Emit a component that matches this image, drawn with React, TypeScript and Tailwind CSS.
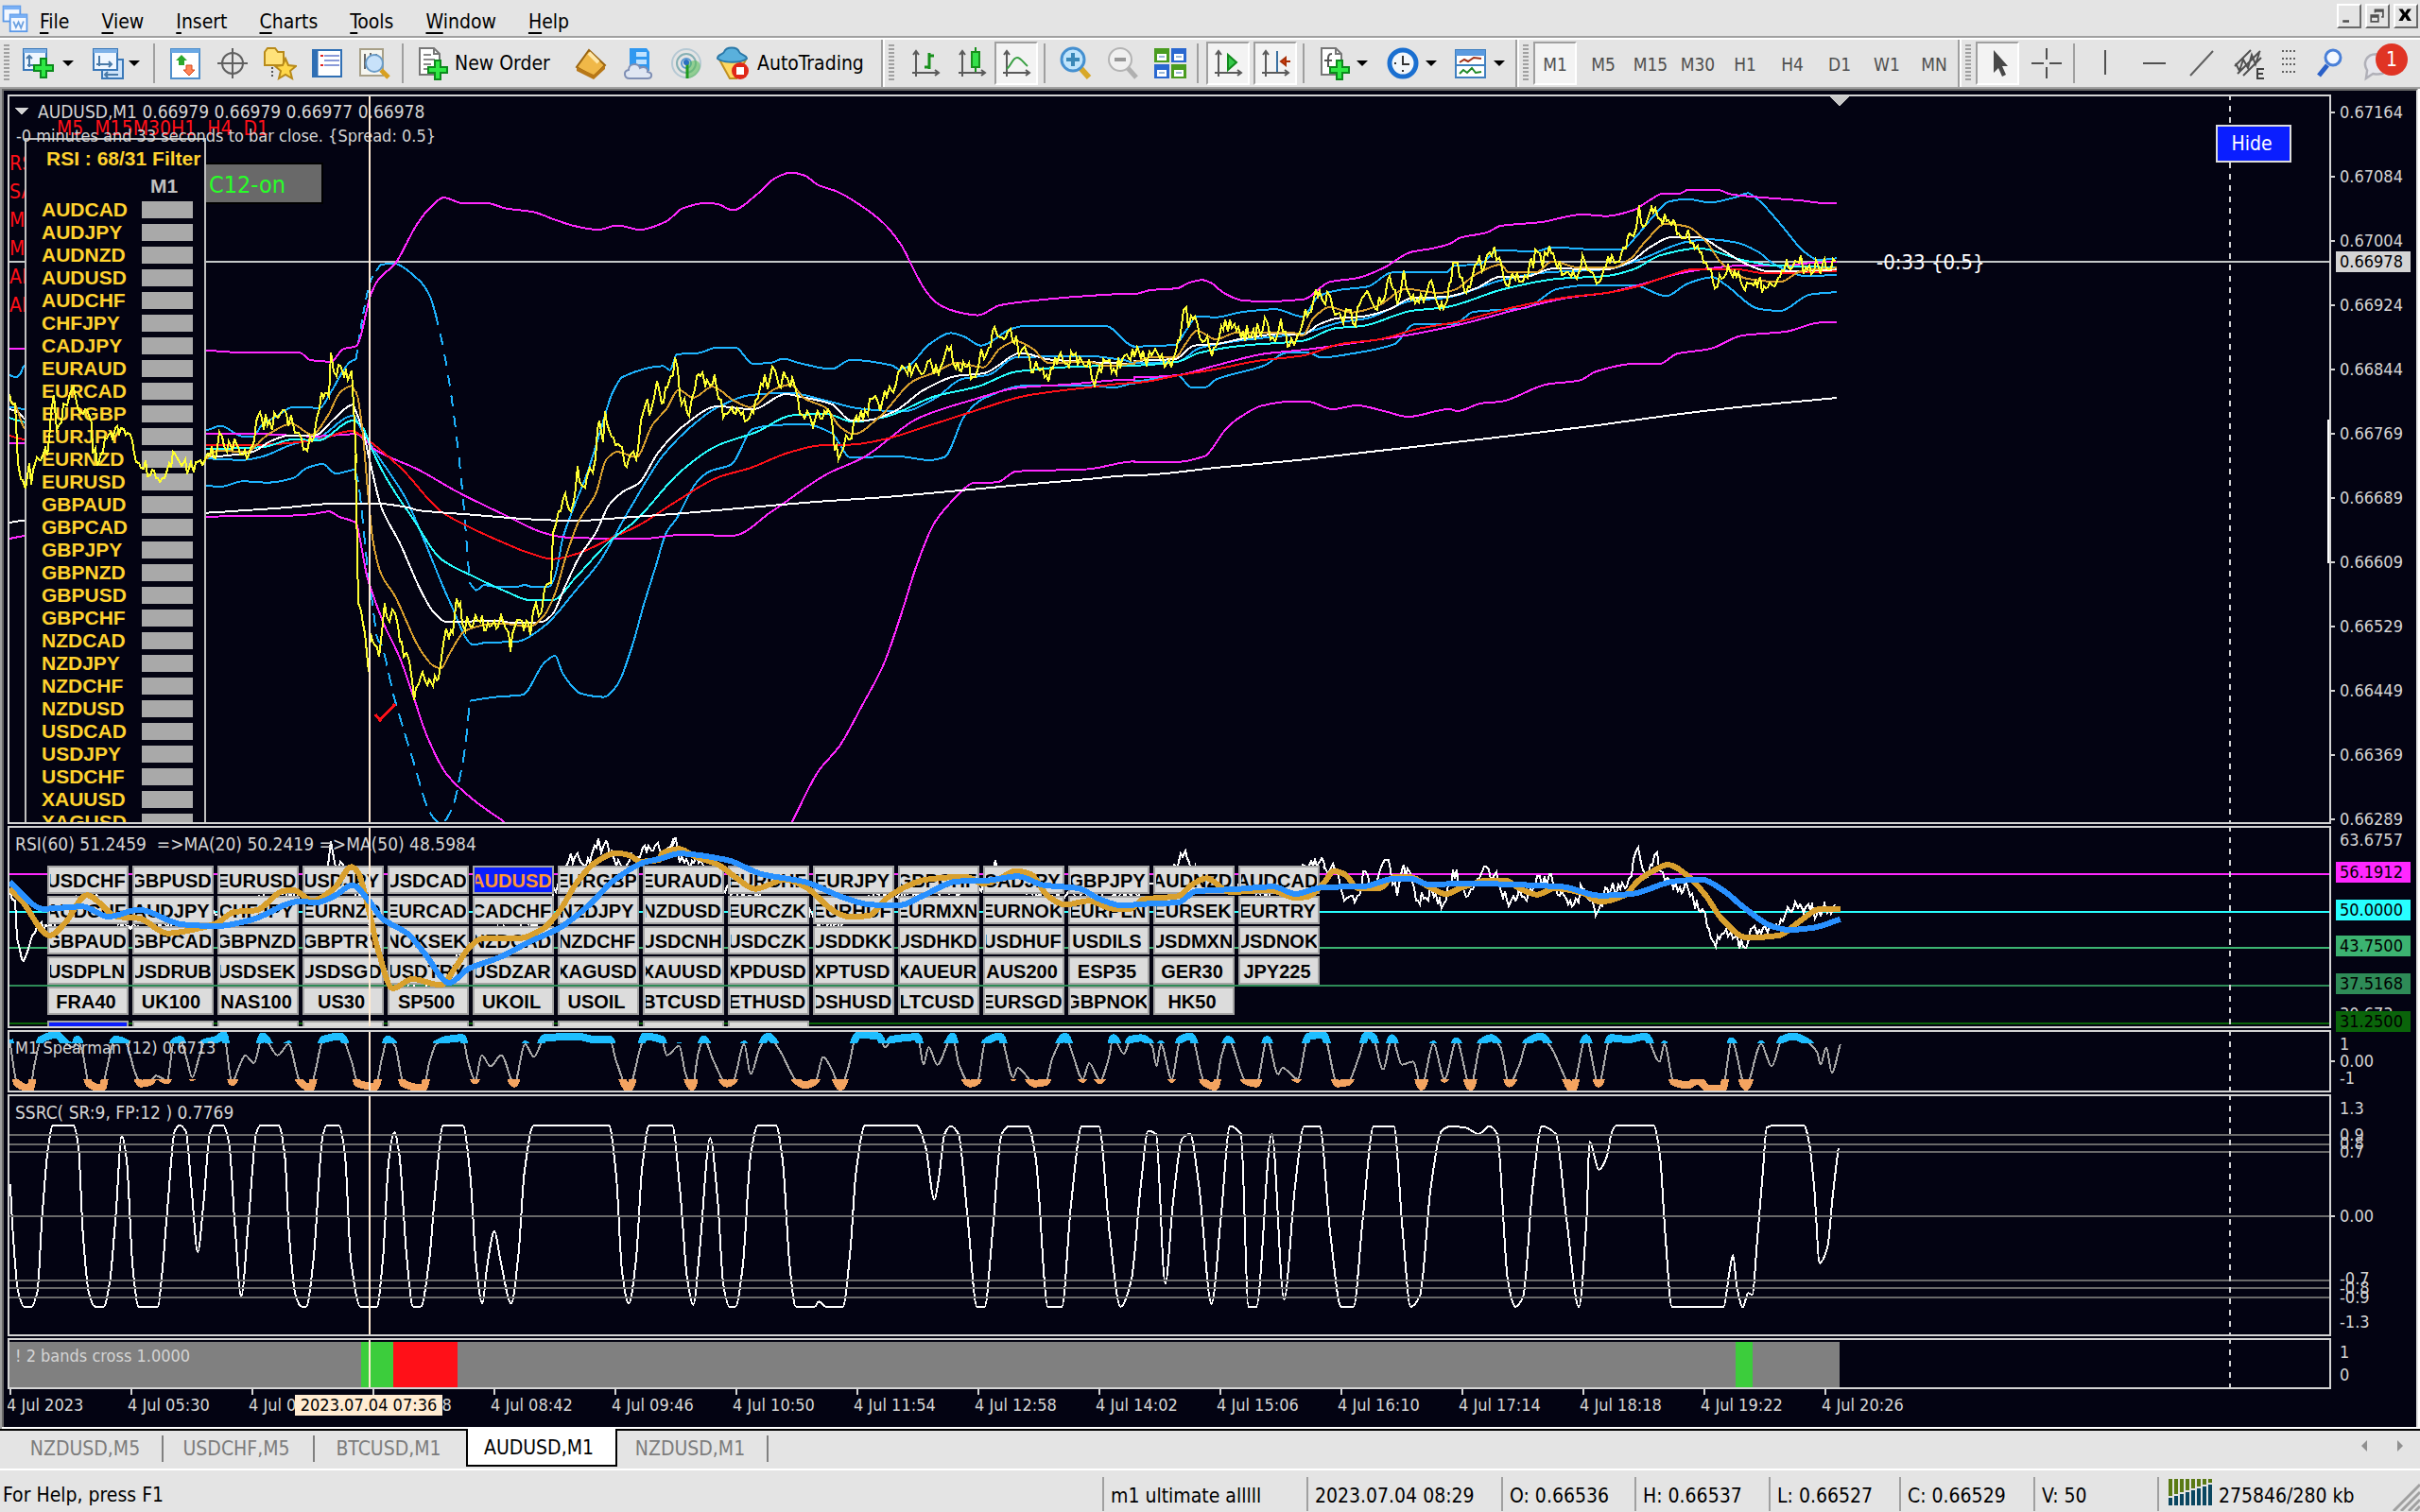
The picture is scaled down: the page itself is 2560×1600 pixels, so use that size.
import { Fragment, ReactNode } from 'react';
import clsx from 'clsx';

type View = { x: number; y: number; kx: number; ky: number };
type Part = [View, string];

// tile viewports the series were recorded in
const HEAD: View = { x: 0, y: 90, kx: 3, ky: 3 };
const HEAD_LOW: View = { x: 0, y: 480, kx: 3, ky: 3 };
const MID: View = { x: 300, y: 160, kx: 1.742, ky: 2.178 };
const TAIL: View = { x: 1200, y: 160, kx: 1.742, ky: 3 };
const SUB_A: View = { x: 0, y: 870, kx: 2.178, ky: 3 };
const SUB_B: View = { x: 700, y: 870, kx: 2.178, ky: 3 };
const SUB_C: View = { x: 1400, y: 860, kx: 1.35, ky: 3 };
const OSC_A: View = { x: 0, y: 1160, kx: 1.568, ky: 3 };
const OSC_B: View = { x: 0, y: 0, kx: 0.6125, ky: 0.6125 };
const OSC_C: View = { x: 1700, y: 1160, kx: 1.823, ky: 3 };

function project(parts: Part[]) {
  return parts.flatMap(([v, data]) =>
    data.split(' ').map((p) => {
      const [x, y] = p.split(',').map(Number);
      return [v.x + x / v.kx, v.y + y / v.ky];
    })
  );
}

const r1 = (n: number) => Math.round(n * 10) / 10;

// monotone cubic through the recorded points
function line(...parts: Part[]) {
  const p = project(parts);
  const slope = p.slice(1).map(([x, y], i) => (x - p[i][0] > 0.5 ? (y - p[i][1]) / (x - p[i][0]) : 0));
  const tangent = p.map((_, i) => {
    const a = slope[i - 1];
    const b = slope[i];
    if (a === undefined || b === undefined) return a ?? b;
    return a * b <= 0 ? 0 : (2 * a * b) / (a + b);
  });
  let d = `M${r1(p[0][0])} ${r1(p[0][1])}`;
  for (let i = 1; i < p.length; i++) {
    const [x0, y0] = p[i - 1];
    const [x1, y1] = p[i];
    const h = (x1 - x0) / 3;
    d +=
      h <= 0.2
        ? `L${r1(x1)} ${r1(y1)}`
        : `C${r1(x0 + h)} ${r1(y0 + tangent[i - 1] * h)} ${r1(x1 - h)} ${r1(y1 - tangent[i] * h)} ${r1(x1)} ${r1(y1)}`;
  }
  return d;
}

// tick noise between the recorded points
function ticks(amp: number, ...parts: Part[]) {
  const pts = project(parts);
  const out = [pts[0]];
  let n = 1;
  for (let i = 1; i < pts.length; i++) {
    const [x0, y0] = pts[i - 1];
    const [x1, y1] = pts[i];
    const steps = Math.max(1, Math.floor((x1 - x0) / 2));
    for (let s = 1; s < steps; s++) {
      n++;
      const r = Math.sin(n * 127.1) * 43758.5453;
      const j = (r - Math.floor(r) - 0.5) * 2 * amp;
      out.push([x0 + ((x1 - x0) * s) / steps, y0 + ((y1 - y0) * s) / steps + j]);
    }
    out.push([x1, y1]);
  }
  return out.map(([x, y]) => `${Math.round(x)},${Math.round(y)}`).join(' ');
}

const PRICE = ticks(
  10,
  [HEAD, '30,980 48,1010 57,1200'],
  [HEAD_LOW, '80,110 92,30 100,100 105,50 125,20'],
  [HEAD, '130,1190 150,1175 170,985 180,1095 195,1070 200,1010 235,960 245,1020 270,1030 290,1070 295,1170 315,1190 345,1110 385,1090 400,1110 425,1170'],
  [HEAD_LOW, '440,30 455,48 490,55 508,90 530,50 555,0 575,40 600,45 635,20'],
  [HEAD, '660,1170 690,1150 697,1100 720,1165 750,1140 790,1175 820,1050 850,1080 875,1050 910,1045 935,1105 970,1155 995,1120 1005,1060 1020,975 1045,990 1050,850 1060,910 1080,890 1105,935 1115,905 1120,960 1125,1075 1130,1200'],
  [MID, '133,700 138,1040 150,1110 156,1200 160,1110 176,1165 186,1040 195,1085 205,1065 215,1130 222,1165 232,1175 241,1265 252,1210 265,1230 283,1220 290,1185 300,1100 312,1110 318,1030 325,1040 330,1090 345,1095 362,1085 380,1095 400,1070 410,1100 418,1155 425,1100 435,1080 455,1115 465,1040 475,1060 485,1000 493,995 497,880 507,830 515,800 530,830 542,725 550,770 560,750 570,740 582,620 588,670 593,600 600,640 620,680 632,728 640,700 650,710 658,620 670,570 675,610 688,530 700,580 712,520 722,475 730,560 738,570 748,610 757,550 772,510 785,540 795,515 802,570 810,615 825,590 840,600 858,615 870,575 880,535 895,530 905,505 912,540 925,520 945,550 952,605 965,600 975,635 985,600 1000,605 1012,640 1015,690 1022,710 1032,685 1042,665 1055,610 1068,620 1080,570 1090,565 1100,600 1108,550 1120,550 1140,495 1150,515 1165,490 1175,515 1187,485 1198,515 1215,490 1230,450 1238,500 1252,485 1270,520 1275,520 1285,455 1295,470 1310,405 1320,430 1335,415 1350,425 1355,470 1365,450 1378,510 1390,500 1402,520 1418,500 1432,465 1440,490 1455,470 1475,495 1485,480 1495,540 1510,480 1530,500 1550,470 1568,475'],
  [TAIL, '5,620 12,660 35,640 50,645 60,675 72,660 80,600 95,495 100,560 112,525 120,590 130,600 142,650 150,620 160,555 180,560 200,570 215,590 230,570 245,545 255,590 265,580 270,530 282,620 298,600 305,575 315,500 330,480 342,445 352,485 360,460 370,520 385,545 390,500 403,545 415,490 428,445 440,490 455,480 470,395 485,485 497,378 510,470 525,480 547,410 555,470 573,487 587,355 600,400 615,430 632,355 645,370 655,320 672,340 690,430 705,385 720,395 743,320 752,370 765,300 780,370 800,385 812,395 830,345 840,380 852,420 865,370 880,330 890,350 905,310 920,270 930,170 938,240 960,180 970,215 985,220 1000,265 1020,250 1030,290 1045,320 1058,375 1070,435 1090,390 1110,400 1125,440 1145,410 1160,430 1175,425 1190,400 1205,370 1225,355 1240,375 1260,360 1280,375 1292,350']
);

const OVERLAYS = [
  {
    color: '#1eb4ff',
    d: line(
      [HEAD, '30,920 50,928 65,915 78,890 300,1060 654,1095 700,1082 770,1115 805,1115 830,1080 880,1050 930,1022 1015,1025 1050,975 1110,880 1130,870'],
    ),
  },
  {
    color: '#1eb4ff',
    dash: '10 6',
    d: line([HEAD, '1130,870 1145,770 1168,650'], [MID, '160,300 178,262']),
  },
  { color: '#1eb4ff', d: line([MID, '178,262 200,258 250,298 270,335 280,375']) },
  { color: '#1eb4ff', dash: '12 10', d: line([MID, '280,375 292,440 305,530 318,650 330,790 343,995']) },
  {
    color: '#1eb4ff',
    d: line(
      [MID, '343,995 355,1012 370,1000 385,1003 425,1005 445,1000 460,1005 490,1003 500,980 515,890 535,820 560,740 585,640 605,560 625,520 700,495 712,505 725,468 765,465 800,452 832,452 865,490 900,487 920,478 950,488 1010,502 1045,481 1120,493 1135,503 1150,497 1190,445 1230,419 1255,428 1285,448 1340,410 1365,403 1515,403 1568,450'],
      [TAIL, '0,620 75,615 95,570 115,525 150,527 200,510 260,502 310,525 340,460 380,440 430,430 475,385 575,385 590,363 635,360 670,315 740,318 770,305 850,312 900,312 925,270 960,200 985,160 1020,152 1060,163 1110,145 1130,133 1150,155 1190,230 1235,320 1260,345 1295,340']
    ),
  },
  { color: '#1eb4ff', d: line([HEAD_LOW, '654,102 700,105 770,88 850,92 930,78 975,45 1025,33 1065,63 1125,50']) },
  {
    color: '#1eb4ff',
    dash: '14 8',
    d: line([HEAD_LOW, '1125,50 1135,80 1150,200 1165,350 1180,460 1200,590'], [MID, '175,1130 205,1265 240,1410 270,1525 290,1550 312,1510 325,1440 335,1370 343,1267']),
  },
  {
    color: '#1eb4ff',
    d: line(
      [MID, '343,1267 390,1258 440,1253 480,1180 500,1163 515,1205 548,1250 590,1258 615,1230 640,1150 665,1040 685,960 705,880 725,845 760,765 785,738 825,722 865,640 900,632 960,629 1010,650 1045,706 1130,703 1190,712 1218,705 1255,610 1290,570 1370,540 1490,540 1530,545 1568,535'],
      [TAIL, '0,730 80,712 105,750 130,750 150,725 240,680 280,640 320,640 345,655 400,643 480,612 515,550 590,548 625,510 720,498 780,437 840,425 920,425 980,460 1020,420 1065,400 1090,425 1150,500 1190,507 1245,455 1295,447']
    ),
  },
  {
    color: '#1eb4ff',
    d: line(
      [HEAD, '30,1022 78,1030 654,1185 770,1190 830,1180 930,1140 1010,1120 1120,1050 1150,1100'],
      [MID, '170,695 225,800 260,900 305,1035 350,1138 370,1133 430,1130 480,1095 540,1010 580,950 640,820 700,700 760,625 800,590 860,562 930,557 1000,575 1060,593 1140,600 1200,570 1250,525 1300,515 1350,475 1480,472 1550,482'],
      [TAIL, '0,672 80,668 120,625 200,600 310,578 380,543 430,530 510,475 575,465 680,408 760,385 870,375 930,345 1020,287 1060,280 1110,290 1150,320 1180,360 1240,397 1295,392']
    ),
  },
  {
    color: '#ff28ff',
    d: line(
      [HEAD, '30,837 78,837 654,843 767,849 950,849 985,873 1050,878 1090,838 1132,828 1165,710'],
      [MID, '158,340 175,295 205,260 245,170 270,130 295,107 330,120 375,120 410,132 460,140 500,158 535,172 580,181 615,171 657,181 705,162 735,132 780,119 800,122 828,136 870,102 905,63 935,49 960,56 985,78 1020,93 1060,122 1105,165 1140,220 1160,270 1185,325 1210,355 1240,370 1280,378 1320,355 1400,342 1500,332 1568,328'],
      [TAIL, '0,453 30,441 80,435 100,418 125,409 140,417 165,450 200,474 240,477 312,470 360,415 410,403 460,370 510,320 545,310 580,295 600,275 650,258 675,237 750,225 825,201 870,206 920,187 950,155 975,134 1005,134 1020,123 1075,123 1100,137 1180,150 1230,157 1265,164 1295,164']
    ),
  },
  {
    color: '#ff28ff',
    d: line(
      [HEAD_LOW, '30,270 78,261 654,201 765,198 880,198 985,193 1045,184 1075,200 1130,220 1140,260 1165,390'],
      [MID, '160,1005 185,1090 215,1170 240,1260 265,1350 300,1435 350,1495 407,1546']
    ),
  },
  {
    color: '#ff28ff',
    d: line(
      [MID, '937,1546 985,1430 1025,1370 1065,1280 1105,1185 1140,1060 1165,960 1200,855 1245,790 1270,765 1315,763 1350,738 1480,733 1568,715'],
      [TAIL, '0,987 75,987 130,968 145,940 165,890 190,850 235,808 285,795 320,795 365,819 410,807 460,825 505,843 580,819 595,825 640,800 675,795 760,740 820,728 850,700 920,675 968,675 1000,643 1060,628 1120,585 1200,573 1265,544 1295,544']
    ),
  },
  {
    color: '#ff28ff',
    d: line(
      [HEAD, '30,1137 78,1137 654,1107 800,1107 1000,1115 1130,1108'],
      [MID, '150,665 165,685 250,735 320,785 410,840 480,880 520,890 655,894 735,884 828,886 900,830 1000,745 1070,705 1170,615 1270,573 1355,545 1440,538 1568,526'],
      [TAIL, '0,718 75,712 150,680 240,643 310,631 400,610 500,585 600,550 700,505 800,465 870,450 930,425 1000,390 1060,372 1120,363 1200,363 1250,354 1295,351']
    ),
  },
  {
    color: '#ff1018',
    d: line(
      [HEAD, '30,1113 78,1125 654,1143 800,1143 1000,1128 1115,1098 1150,1115'],
      [MID, '160,670 180,690 220,735 290,830 340,865 410,905 450,925 497,940 540,928 610,888 655,862 720,810 800,752 860,730 930,695 990,678 1050,676 1110,663 1200,628 1270,600 1370,563 1480,545 1568,534'],
      [TAIL, '0,735 80,712 150,692 230,665 310,649 380,612 450,598 520,565 600,540 700,495 800,463 870,450 930,428 980,398 1030,375 1110,375 1160,387 1230,385 1295,380']
    ),
  },
  {
    color: '#28ffff',
    d: line(
      [HEAD, '30,1057 78,1070 654,1155 830,1150 930,1125 1010,1128 1120,1065 1150,1085'],
      [MID, '160,680 190,755 240,850 290,940 350,980 410,1015 455,1035 495,1035 540,980 600,900 650,850 730,740 800,678 870,648 940,608 1000,606 1050,624 1110,612 1200,565 1280,542 1350,508 1450,497 1568,494'],
      [TAIL, '0,680 80,668 120,640 200,617 310,602 370,562 420,555 510,507 575,495 680,438 780,405 870,396 920,375 970,330 1040,308 1120,345 1180,363 1295,369']
    ),
  },
  {
    color: '#ffffff',
    d: line(
      [HEAD, '30,1028 60,1040 78,1060 654,1180 800,1165 860,1130 920,1112 1000,1112 1060,1060 1120,1015'],
      [MID, '130,590 145,640 160,720 180,820 215,905 250,1005 275,1060 300,1085 395,1082 425,1088 475,1085 495,1068 520,1000 545,935 575,880 600,815 625,785 655,765 690,695 740,630 800,588 865,595 925,560 960,568 1010,583 1045,620 1075,620 1125,600 1180,550 1240,518 1290,512 1360,465 1410,480 1520,488 1568,490'],
      [TAIL, '0,665 75,660 110,617 150,612 200,595 270,580 310,583 340,550 375,530 420,525 470,502 510,467 575,462 630,435 675,398 720,399 770,373 870,375 915,350 950,305 990,273 1040,273 1080,310 1130,360 1170,382 1230,380 1295,376']
    ),
  },
  {
    color: '#ffffff',
    d: line(
      [HEAD_LOW, '30,219 78,212 654,188 780,180 900,172 1075,158 1190,158 1290,170'],
      [MID, '250,828 350,838 450,848 540,852 600,847 720,836 850,822 980,808 1100,798 1220,785 1350,770 1480,756 1568,747'],
      [TAIL, '0,1029 150,1005 300,981 420,957 550,932 700,902 850,871 980,840 1100,815 1295,783']
    ),
  },
  {
    color: '#d9a02e',
    d: line(
      [HEAD, '30,1000 50,1020 65,1060 78,1090 654,1185 690,1160 780,1165 850,1110 925,1075 990,1110 1040,1050 1080,975 1115,955 1130,975'],
      [MID, '134,560 145,640 155,780 165,900 180,975 205,1025 250,1145 275,1185 290,1192 305,1160 335,1105 395,1088 455,1095 480,1070 500,1020 520,935 545,850 575,790 595,710 615,693 650,705 680,630 705,595 728,550 755,568 790,543 830,575 860,590 905,548 935,538 960,570 1000,592 1025,635 1050,652 1100,610 1160,530 1200,510 1240,488 1290,498 1320,455 1350,438 1380,455 1410,488 1480,485 1520,495 1568,490'],
      [TAIL, '0,668 30,655 75,655 95,610 115,570 150,597 190,575 290,575 310,585 330,530 360,495 400,512 450,490 500,437 560,450 590,440 630,390 675,360 690,385 740,385 770,350 820,370 880,370 915,340 940,290 980,230 1020,240 1050,280 1085,360 1130,405 1190,415 1230,380 1295,370']
    ),
  },
];

const RSI = ticks(
  8,
  [SUB_A, '22,215 35,250 40,370 55,440 70,380 80,350 110,330 200,230 300,340 420,320 520,300 620,225 700,240 755,138 763,60 770,130 785,125 795,150 850,320 900,500 1000,500 1100,370 1240,320 1290,180 1310,130 1330,100 1340,130 1360,130 1378,50 1385,95 1396,60 1405,110 1430,138 1460,120 1485,75 1500,90 1515,65 1530,110 1555,60'],
  [SUB_B, '10,90 20,90 33,50 42,130 75,130 90,120 110,190 200,235 400,325 500,230 740,200 768,120 800,200 900,235 1100,230 1190,138 1206,90 1220,160 1400,230 1500,138 1520,115 1530,150'],
  [SUB_C, '0,170 10,180 18,190 30,280 45,285 60,185 70,240 93,150 105,265 115,165 135,280 155,250 172,290 185,180 207,265 220,210 236,180 250,220 265,298 280,240 290,280 305,200 312,240 322,195 335,260 355,298 370,240 389,328 405,240 430,240 440,200 450,110 460,195 473,135 485,190 500,240 520,235 530,300 545,320 560,425 575,370 585,400 600,425 613,365 625,385 640,360 650,370 660,320 680,290 695,310 705,325 730,290']
);

const RSI_FAST = line(
  [SUB_A, '22,210 50,250 115,360 150,320 200,232 270,300 320,305 385,353 450,340 500,320 540,285 590,280 650,220 675,215 720,250 770,210 810,142 825,160 850,280 870,400 905,528 950,498 1015,517 1050,460 1080,400 1110,370 1190,370 1250,340 1290,280 1330,190 1370,130 1420,98 1450,105 1475,125 1520,120'],
  [SUB_B, '0,100 40,85 75,108 130,135 170,175 215,212 285,182 330,205 400,285 430,300 475,298 520,240 570,200 610,182 700,173 740,195 780,178 815,155 850,165 890,235 930,262 985,250 1040,275 1080,275 1110,245 1190,235 1220,200 1255,178 1310,222 1400,215 1460,240 1485,238'],
  [SUB_C, '0,225 15,185 30,195 50,240 80,240 100,205 125,205 150,235 175,258 195,240 235,215 260,215 280,240 305,260 330,240 370,255 395,283 430,262 450,215 475,180 492,165 520,200 545,260 570,340 605,397 650,390 680,345 710,305 738,305']
);

const RSI_SLOW = line(
  [SUB_A, '22,190 100,275 190,268 250,300 320,278 420,325 500,330 580,310 690,252 730,255 770,235 812,200 850,250 880,305 940,355 980,420 1035,510 1080,465 1150,430 1220,380 1290,335 1360,260 1410,190 1480,130'],
  [SUB_B, '0,115 40,100 150,120 230,165 330,190 420,240 480,262 545,265 600,235 680,188 750,185 820,172 880,200 960,210 1010,245 1060,265 1110,260 1190,255 1230,220 1320,213 1410,205 1460,228 1510,210'],
  [SUB_C, '0,237 60,233 100,210 125,210 150,228 200,225 340,235 395,263 440,258 500,218 540,212 570,245 600,300 640,360 665,372 700,365 738,338']
);

const SPEARMAN = line(
  [SUB_A, '22,690 40,830 70,845 78,780 95,690 130,675 150,700 170,715 178,690 190,730 205,830 235,845 245,790 265,690 290,700 310,790 325,830 345,825 360,805 385,820 400,700 415,690 430,750 443,810 460,740 470,700 500,690 515,675 535,825 550,780 565,740 585,765 605,680 640,740 665,705 690,820 715,845 725,800 745,690 785,680 810,760 825,830 865,840 880,750 893,690 910,710 930,830 975,845 990,760 1005,705 1030,690 1065,685 1080,770 1095,820 1110,740 1130,775 1155,740 1185,830 1210,705 1230,745 1255,685 1330,680 1370,690 1405,690 1420,760 1448,845 1475,720 1485,680'],
  [SUB_B, '0,690 12,740 40,710 55,800 70,840 85,730 97,690 120,760 150,830 165,820 190,705 205,800 225,720 245,680 270,720 310,820 330,835 355,820 372,745 390,780 412,840 430,780 445,690 455,675 500,680 515,715 530,690 590,682 603,770 615,715 635,770 660,700 670,680 685,770 710,830 728,820 745,700 780,680 810,810 820,780 860,830 885,825 900,750 930,680 945,730 970,815 985,765 1010,820 1030,750 1040,685 1065,735 1080,690 1105,685 1130,710 1140,775 1150,705 1175,815 1195,690 1220,680 1250,825 1275,840 1290,740 1305,690 1345,820 1370,830 1395,690 1420,800 1430,780 1465,815 1490,680'],
  [SUB_C, '0,705 20,860 35,855 50,780 62,705 70,710 85,815 98,715 112,800 128,790 140,870 157,735 173,845 190,725 210,870 225,730 240,715 253,745 265,860 280,800 290,730 310,710 325,745 345,840 355,878 375,715 393,860 410,715 435,720 460,710 480,790 487,735 500,855 520,865 535,850 550,875 570,875 583,725 603,870 625,735 640,805 655,720 672,710 685,720 705,760 710,800 718,745 726,825 738,735']
);

const SSRC = line(
  [OSC_A, '17,280 22,450 30,620 40,668 52,668 62,620 70,380 80,160 88,93 122,93 130,160 138,450 148,630 158,668 172,668 182,590 192,380 202,125 210,200 220,540 230,668 262,668 268,580 278,350 290,110 298,93 308,110 318,300 328,495 338,330 348,120 355,93 370,93 380,150 390,420 400,635 412,400 425,120 432,93 462,93 472,180 480,450 490,630 500,668 508,668 520,520 535,130 542,93 562,93 572,180 582,520 598,668 625,668 635,520 645,200 654,115 662,180 675,520 685,668 698,668 712,520 722,300 735,93 768,93 780,250 790,540 800,658 808,540 820,428 830,520 848,658 860,500 870,240 885,93 1010,93 1022,250 1032,560 1043,658 1055,520 1065,230 1077,93 1115,93 1128,300 1140,580 1150,662 1160,500 1178,133 1190,320 1200,600 1210,668 1220,668 1232,540 1245,190 1257,93 1287,93 1298,200 1310,540 1320,668 1352,668 1358,652 1370,668 1398,668 1410,500 1420,240 1435,93 1520,93 1535,160 1550,328 1558,250'],
  [OSC_B, '612,735 616,730 621,735 627,790 633,847 638,847 643,800 649,735 654,730 666,730 671,750 679,847 688,847 694,780 701,730 712,730 719,800 726,847 733,830 739,770 744,733 749,735 755,832 760,780 766,738 771,735 777,770 785,845 791,790 797,730 804,735 809,847 814,847 824,735 832,842 839,770 845,730 855,730 862,800 869,847 877,847 883,790 890,730 903,730 909,800 914,847 920,840 927,770 934,733 940,730 950,731 958,735 965,730 970,735 977,830 982,847 987,840 993,770 999,730 1008,735 1015,790 1023,847 1028,790 1030,740 1036,758'],
  [OSC_C, '0,190 8,120 18,93 90,93 102,190 112,430 125,668 225,668 235,570 243,505 250,600 262,670 272,625 280,630 290,450 300,250 308,100 320,93 380,93 390,150 400,300 410,530 425,480 435,320 446,165']
);

const PRICE_LABELS = ['0.67164', '0.67084', '0.67004', '0.66924', '0.66844', '0.66769', '0.66689', '0.66609', '0.66529', '0.66449', '0.66369', '0.66289'];

const TIME_LABELS = ['4 Jul 2023', '4 Jul 05:30', '4 Jul 06:34', '4 Jul 07:38', '4 Jul 08:42', '4 Jul 09:46', '4 Jul 10:50', '4 Jul 11:54', '4 Jul 12:58', '4 Jul 14:02', '4 Jul 15:06', '4 Jul 16:10', '4 Jul 17:14', '4 Jul 18:18', '4 Jul 19:22', '4 Jul 20:26'];

const FILTER_PAIRS = 'AUDCAD AUDJPY AUDNZD AUDUSD AUDCHF CHFJPY CADJPY EURAUD EURCAD EURGBP EURJPY EURNZD EURUSD GBPAUD GBPCAD GBPJPY GBPNZD GBPUSD GBPCHF NZDCAD NZDJPY NZDCHF NZDUSD USDCAD USDJPY USDCHF XAUUSD XAGUSD'.split(' ');

const SYMBOL_ROWS = [
  'USDCHF GBPUSD EURUSD USDJPY USDCAD AUDUSD EURGBP EURAUD EURCHF EURJPY GBPCHF CADJPY GBPJPY AUDNZD AUDCAD',
  'AUDCHF AUDJPY CHFJPY EURNZD EURCAD CADCHF NZDJPY NZDUSD EURCZK EURHUF EURMXN EURNOK EURPLN EURSEK EURTRY',
  'GBPAUD GBPCAD GBPNZD GBPTRY NOKSEK NZDCAD NZDCHF USDCNH USDCZK USDDKK USDHKD USDHUF USDILS USDMXN USDNOK',
  'USDPLN USDRUB USDSEK USDSGD USDTRY USDZAR XAGUSD XAUUSD XPDUSD XPTUSD XAUEUR AUS200 ESP35 GER30 JPY225',
  'FRA40 UK100 NAS100 US30 SP500 UKOIL USOIL BTCUSD ETHUSD DSHUSD LTCUSD EURSGD GBPNOK HK50',
].map((r) => r.split(' '));

const STATUS = [
  { text: 'm1 ultimate alllll', width: 'w-[216px]' },
  { text: '2023.07.04 08:29', width: 'w-[206px]' },
  { text: 'O: 0.66536', width: 'w-[141px]' },
  { text: 'H: 0.66537', width: 'w-[142px]' },
  { text: 'L: 0.66527', width: 'w-[138px]' },
  { text: 'C: 0.66529', width: 'w-[142px]' },
  { text: 'V: 50', width: 'w-[131px]' },
];

/* ---------- toolbar ---------- */

function Icon({ children, size = 'size-9' }: { children: ReactNode; size?: string }) {
  return (
    <svg viewBox="0 0 36 36" className={clsx('shrink-0', size)} fill="none" aria-hidden="true">
      {children}
    </svg>
  );
}

const Plus = ({ x, y }: { x: number; y: number }) => (
  <path
    d={`M${x + 7} ${y}h6v7h7v6h-7v7h-6v-7h-7v-6h7z`}
    fill="#2fe844"
    stroke="#0b8a1c"
    strokeWidth="2"
  />
);

const Axes = () => <path d="M8 6v26M4 28h28M5 9l3-4 3 4M28 25l4 3-4 3" stroke="#5a5a5a" strokeWidth="2" />;

const Doc = () => (
  <>
    <path d="M5 2h15l6 6v22H5z" fill="#fff" stroke="#777" strokeWidth="2" />
    <path d="M20 2v6h6" stroke="#777" strokeWidth="2" />
  </>
);

function Tool({ label, children, width = 'w-[50px]', pressed = false, className }: { label: string; children: ReactNode; width?: string; pressed?: boolean; className?: string }) {
  return (
    <button
      type="button"
      aria-label={label}
      aria-pressed={pressed}
      className={clsx(
        'flex h-[46px] shrink-0 items-center justify-center',
        width,
        pressed && 'border-2 border-[#a0a0a0] border-r-white border-b-white bg-[#f3f3f3]',
        className
      )}
    >
      {children}
    </button>
  );
}

const Caret = () => <span className="size-0 shrink-0 border-x-[6px] border-t-[6px] border-x-transparent border-t-black" />;
const Sep = ({ className }: { className?: string }) => <span className={clsx('h-[42px] w-[2px] shrink-0 bg-[#a0a0a0]', className)} />;
const Grip = () => (
  <span className="my-auto ml-[4px] h-[40px] w-[6px] shrink-0 bg-[repeating-linear-gradient(180deg,#a0a0a0_0_2px,transparent_2px_4px)]" />
);
const GroupEnd = ({ className }: { className?: string }) => (
  <span className={clsx('h-full w-[4px] shrink-0 border-l-2 border-[#a0a0a0] bg-white', className)} />
);

function Toolbar() {
  return (
    <div className="flex h-[50px] items-center overflow-hidden text-[21px] leading-none" role="toolbar">
      <Grip />
      <Tool label="New chart" width="w-[72px]" className="ml-[4px] gap-[8px]">
        <Icon>
          <rect x="3" y="3" width="24" height="22" fill="#eef6ff" stroke="#3a78b8" strokeWidth="2" />
          <path d="M3 5h24" stroke="#7fb2e8" strokeWidth="4" />
          <path d="M9 10v12M6 13l3-3 3 3M7 20h14" stroke="#4a7aa8" strokeWidth="2" />
          <Plus x={14} y={13} />
        </Icon>
        <Caret />
      </Tool>
      <Tool label="Profiles" width="w-[72px]" className="gap-[4px]">
        <Icon>
          <rect x="12" y="14" width="22" height="20" fill="#cfe4fa" stroke="#3a78b8" strokeWidth="2" />
          <rect x="3" y="3" width="25" height="22" fill="#eef6ff" stroke="#3a78b8" strokeWidth="2" />
          <path d="M3 5h25" stroke="#7fb2e8" strokeWidth="4" />
          <path d="M9 10v11M6 19h16M19 16l3 3-3 3M15 30h14M18 27l-3 3 3 3" stroke="#4a7aa8" strokeWidth="2" />
        </Icon>
        <Caret />
      </Tool>
      <Sep className="ml-[4px] mr-[7px]" />
      <Tool label="Market Watch">
        <Icon>
          <rect x="3" y="3" width="30" height="31" fill="#fff" stroke="#4f8fcc" strokeWidth="2" />
          <path d="M3 5h30" stroke="#6aa8e4" strokeWidth="4" />
          <path d="M14 9l6 6h-3v5h-6v-5H8z" fill="#2ca82c" />
          <path d="M22 31l-6-6h3v-5h6v5h3z" fill="#ff8458" stroke="#d84818" />
        </Icon>
      </Tool>
      <Tool label="Data Window">
        <Icon>
          <circle cx="18" cy="18" r="11" stroke="#606060" strokeWidth="2" />
          <path d="M18 2v32M2 18h32" stroke="#606060" strokeWidth="2" />
        </Icon>
      </Tool>
      <Tool label="Navigator">
        <Icon>
          <path d="M2 6l3-4h8l3 4h6v14H2z" fill="#ffe27a" stroke="#b88a1a" strokeWidth="2" />
          <path d="M10 22v12" stroke="#555" strokeWidth="2" strokeDasharray="2 2" />
          <path d="M24 13l3 7 8 1-6 5 2 8-7-4-7 4 2-8-6-5 8-1z" fill="#ffd84a" stroke="#b88a1a" strokeWidth="2" />
        </Icon>
      </Tool>
      <Tool label="Terminal">
        <Icon>
          <rect x="3" y="4" width="30" height="28" fill="#fff" stroke="#2f6fb4" strokeWidth="2" />
          <path d="M6 5v26" stroke="#2f6fb4" strokeWidth="5" />
          <path d="M15 10h16M15 15h16M15 20h16" stroke="#8a9ad8" strokeWidth="2" />
          <path d="M11 10h3M11 20h3" stroke="#e02020" strokeWidth="2" />
        </Icon>
      </Tool>
      <Tool label="Strategy Tester">
        <Icon>
          <rect x="3" y="3" width="24" height="28" fill="#f6f6f0" stroke="#a8a088" strokeWidth="2" />
          <path d="M8 8v16M14 7v10M20 8v8" stroke="#666" strokeWidth="2" />
          <path d="M25 25l8 8" stroke="#d8a020" strokeWidth="5" />
          <circle cx="18" cy="18" r="9" fill="#c8e2fa" stroke="#6a9cc8" strokeWidth="2" />
        </Icon>
      </Tool>
      <Sep className="ml-[4px]" />
      <button type="button" className="ml-[12px] flex h-[46px] w-[162px] shrink-0 items-center gap-[6px] whitespace-nowrap">
        <Icon>
          <Doc />
          <path d="M9 9h8M9 14h12M9 19h8M9 24h6" stroke="#8a8a8a" strokeWidth="2" />
          <Plus x={14} y={15} />
        </Icon>
        New Order
      </button>
      <Tool label="MetaEditor">
        <Icon>
          <path d="M15 4L32 20 20 32 2 22z" fill="#f0b848" stroke="#9a6410" strokeWidth="2" />
          <path d="M2 22l18 8 12-10v4L20 35 2 26z" fill="#b87818" />
          <path d="M15 7l10 10" stroke="#ffe7a8" strokeWidth="4" />
        </Icon>
      </Tool>
      <Tool label="MQL5 Cloud">
        <Icon>
          <path d="M8 2h18l3 4v20H8z" fill="#2f98f0" />
          <path d="M15 6h11v5H15zM15 14h11v5H15z" fill="#bfe2ff" />
          <path d="M8 34c-6 0-7-8-1-9 0-7 10-8 12-2 5-3 9 1 8 4 6 1 5 7 0 7z" fill="#dfe6f2" stroke="#7f8fb4" strokeWidth="2" />
        </Icon>
      </Tool>
      <Tool label="Signals">
        <Icon>
          <circle cx="18" cy="18" r="15" stroke="#b6c9d4" strokeWidth="2" />
          <circle cx="18" cy="18" r="10" stroke="#86b0b4" strokeWidth="2" />
          <circle cx="18" cy="18" r="5" stroke="#5a98d0" strokeWidth="2" />
          <path d="M19 18c11-8 18 2 11 10-3 4-7 6-11 6z" fill="#5cbf5c" opacity=".6" />
          <path d="M19 18v16" stroke="#1f9a1f" strokeWidth="3" />
          <circle cx="18" cy="17" r="3" fill="#2a6fc0" />
        </Icon>
      </Tool>
      <button type="button" className="ml-[6px] flex h-[46px] w-[175px] shrink-0 items-center gap-[8px] whitespace-nowrap">
        <Icon>
          <path d="M4 14h28L22 34h-7z" fill="#ffd860" stroke="#c09020" strokeWidth="2" />
          <path d="M2 13c0-5 6-4 7-7 2-6 14-6 16 0 1 3 8 3 8 7-6 5-25 5-31 0z" fill="#5ab0dc" stroke="#2a78a8" strokeWidth="2" />
          <circle cx="26" cy="26" r="9" fill="#e02818" />
          <rect x="22" y="22" width="8" height="8" fill="#fff" />
        </Icon>
        AutoTrading
      </button>
      <GroupEnd />
      <Grip />
      <Tool label="Bar chart" className="ml-[8px]">
        <Icon>
          <Axes />
          <path d="M22 7v17M22 10h5M17 22h5" stroke="#18901c" strokeWidth="3" />
        </Icon>
      </Tool>
      <Tool label="Candlesticks" width="w-[48px]">
        <Icon>
          <Axes />
          <path d="M22 1v26" stroke="#18901c" strokeWidth="2" />
          <rect x="18" y="6" width="8" height="16" fill="#35e04a" stroke="#18901c" strokeWidth="2" />
        </Icon>
      </Tool>
      <Tool label="Line chart" width="w-[46px]" pressed>
        <Icon>
          <Axes />
          <path d="M8 24c5-4 6-12 11-12 4 0 7 6 11 9" stroke="#3aa044" strokeWidth="2" />
        </Icon>
      </Tool>
      <Sep className="ml-[6px] mr-[7px]" />
      <Tool label="Zoom in">
        <Icon>
          <path d="M23 23l9 10" stroke="#d8a828" strokeWidth="6" />
          <circle cx="15" cy="14" r="12" fill="#bfe4fc" stroke="#4590d0" strokeWidth="3" />
          <path d="M15 7v14M8 14h14" stroke="#3a88b8" strokeWidth="4" />
        </Icon>
      </Tool>
      <Tool label="Zoom out">
        <Icon>
          <path d="M23 23l9 10" stroke="#b0b0b0" strokeWidth="5" />
          <circle cx="15" cy="14" r="12" fill="#f0f0f0" stroke="#b4b4b4" strokeWidth="2" />
          <path d="M9 14h12" stroke="#989898" strokeWidth="4" />
        </Icon>
      </Tool>
      <Tool label="Tile windows">
        <Icon>
          <path d="M1 2h16v15H1zM19 19h16v15H19z" fill="#4a9c20" />
          <path d="M19 2h16v15H19zM1 19h16v15H1z" fill="#2a68d0" />
          <path d="M4 8h10v7H4zM22 8h10v7H22zM4 25h10v7H4zM22 25h10v7H22z" fill="#fff" />
          <path d="M6 11h6M24 11h6M6 28h6M24 28h6" stroke="#9ab8d8" strokeWidth="2" />
        </Icon>
      </Tool>
      <Sep className="ml-[3px] mr-[8px]" />
      <Tool label="Auto scroll" width="w-[46px]" pressed>
        <Icon>
          <Axes />
          <path d="M18 9l9 8-9 8z" fill="#35c84a" stroke="#118a1c" strokeWidth="2" />
        </Icon>
      </Tool>
      <Tool label="Chart shift" width="w-[46px]" pressed className="ml-[4px]">
        <Icon>
          <Axes />
          <path d="M20 5v22" stroke="#3a70a0" strokeWidth="2" />
          <path d="M34 16h-6M29 12l-5 4 5 4z" fill="#d84010" stroke="#a83008" strokeWidth="2" />
        </Icon>
      </Tool>
      <Sep className="ml-[6px] mr-[7px]" />
      <Tool label="Indicators" width="w-[66px]" className="gap-[6px]">
        <Icon>
          <Doc />
          <path d="M16 8c-4 0-4 3-4 6v8M8 15h8" stroke="#555" strokeWidth="2" />
          <Plus x={14} y={15} />
        </Icon>
        <Caret />
      </Tool>
      <Tool label="Periods" width="w-[66px]" className="ml-[7px] gap-[6px]">
        <Icon>
          <circle cx="18" cy="18" r="14" fill="#f2f6fa" stroke="#1a6fd0" strokeWidth="5" />
          <path d="M18 10v9h7M9 18h2M18 27v-2" stroke="#333" strokeWidth="2" />
        </Icon>
        <Caret />
      </Tool>
      <Tool label="Templates" width="w-[66px]" className="ml-[6px] gap-[6px]">
        <Icon>
          <rect x="2" y="4" width="31" height="29" fill="#fff" stroke="#4080c0" strokeWidth="2" />
          <path d="M2 7h31" stroke="#5a9ae0" strokeWidth="6" />
          <path d="M2 20h31" stroke="#4080c0" strokeWidth="2" />
          <path d="M6 17l5-3 4 2 6-4 8 1" stroke="#a03018" strokeWidth="2" />
          <path d="M6 29l4-4 4 3 5-5 4 5 6-1" stroke="#208a28" strokeWidth="2" />
        </Icon>
        <Caret />
      </Tool>
      <GroupEnd className="ml-[5px]" />
      <Grip />
      <Tool label="M1" width="w-[46px]" pressed className="ml-[5px] mr-[3px] pt-[2px] text-[19px] text-[#505050]">M1</Tool>
      {['M5', 'M15', 'M30', 'H1', 'H4', 'D1', 'W1', 'MN'].map((p) => (
        <Tool key={p} label={p} className="pt-[2px] text-[19px] text-[#505050]">
          {p}
        </Tool>
      ))}
      <GroupEnd />
      <Grip />
      <Tool label="Cursor" width="w-[46px]" pressed className="ml-[5px]">
        <Icon>
          <path d="M14 4v24l5-5 4 9 4-2-4-9h6z" fill="#484848" />
        </Icon>
      </Tool>
      <Tool label="Crosshair" width="w-[57px]">
        <Icon>
          <path d="M18 2v12M18 22v12M2 18h13M21 18h13" stroke="#505050" strokeWidth="2" />
        </Icon>
      </Tool>
      <Sep className="mr-[5px]" />
      <Tool label="Vertical line" width="w-[54px]">
        <Icon>
          <path d="M18 4v26" stroke="#505050" strokeWidth="2" />
        </Icon>
      </Tool>
      <Tool label="Horizontal line">
        <Icon>
          <path d="M6 18h24" stroke="#505050" strokeWidth="2" />
        </Icon>
      </Tool>
      <Tool label="Trendline">
        <Icon>
          <path d="M6 31L30 5" stroke="#606060" strokeWidth="2" />
        </Icon>
      </Tool>
      <Tool label="Equidistant channel">
        <Icon>
          <path d="M3 21L20 4M6 29L30 5M12 31L31 12M4 18l4 8 4-12 5 9 4-14 4 10 4-12" stroke="#505050" strokeWidth="2" />
          <path d="M34 24h-7v10h7M27 29h6" stroke="#404040" strokeWidth="2" />
        </Icon>
      </Tool>
      <Tool label="Fibonacci retracement" width="w-[36px]">
        <Icon>
          <path d="M10 5h16M10 13h16M10 19h16M10 27h16" stroke="#606060" strokeWidth="2" strokeDasharray="2 2" />
        </Icon>
      </Tool>
      <Tool label="Search">
        <Icon>
          <path d="M6 31l9-11" stroke="#2a60c8" strokeWidth="5" />
          <circle cx="21" cy="12" r="8" fill="#f4f8ff" stroke="#4a80d8" strokeWidth="3" />
        </Icon>
      </Tool>
      <Tool label="Notifications" width="w-[60px]" className="relative">
        <Icon size="size-[44px]">
          <path d="M13 10c-9 0-12 8-8 14l-1 7 6-4c10 2 14-3 14-9z" fill="#e6e6ec" stroke="#b0b0b8" strokeWidth="2" />
        </Icon>
        <span className="absolute right-[3px] top-[2px] flex size-[34px] items-center justify-center rounded-full bg-[#e03424] text-[21px] text-white">1</span>
      </Tool>
    </div>
  );
}

function MenuBar() {
  return (
    <div className="flex h-[38px] items-center text-[21px] leading-none">
      <Icon size="size-8">
        <rect x="4" y="4" width="20" height="18" fill="#f4f8ff" stroke="#5a98e8" strokeWidth="2" />
        <path d="M4 6h20" stroke="#7ab0f4" strokeWidth="4" />
        <rect x="12" y="14" width="20" height="20" fill="#f4f8ff" stroke="#5a98e8" strokeWidth="2" />
        <path d="M12 16h20" stroke="#7ab0f4" strokeWidth="4" />
        <path d="M16 22l3 7 3-6 3 7 3-8" stroke="#6aa0e0" strokeWidth="2" />
      </Icon>
      <nav className="ml-[10px] mt-[8px] flex gap-[34px]">
        {['File', 'View', 'Insert', 'Charts', 'Tools', 'Window', 'Help'].map((m) => (
          <button type="button" key={m}>
            <span className="underline underline-offset-4">{m[0]}</span>
            {m.slice(1)}
          </button>
        ))}
      </nav>
      <div className="mb-1 ml-auto mr-[2px] flex gap-[4px]">
        {[
          ['Minimize', 'M5 18h8v3H5z'],
          ['Restore', 'M9 4h12v11h-3v-2h1V8h-8v1H9zM4 11h11v10H4zm2 4v4h7v-4z'],
          ['Close', 'M4 4h5l3 5 3-5h5l-5 7 5 8h-5l-3-5-3 5H4l5-8z'],
        ].map(([label, d]) => (
          <button type="button" key={label} aria-label={label} className="size-[26px] border-2 border-white border-r-[#696969] border-b-[#696969]">
            <svg viewBox="0 0 26 26" className="size-full" aria-hidden="true">
              <path d={d} fill={label === 'Close' ? '#000' : '#505050'} />
            </svg>
          </button>
        ))}
      </div>
    </div>
  );
}

/* ---------- chart panels ---------- */

const GRID = '#d4d4d4';

function Plot({ top, children }: { top: number; children: ReactNode }) {
  return (
    <svg className="pointer-events-none absolute inset-0 size-full" fill="none" shapeRendering="crispEdges" aria-hidden="true">
      <g transform={`translate(-10 ${-top})`} strokeWidth="2">
        {children}
      </g>
    </svg>
  );
}

// crosshair and the day separator that run through every window
function Guides() {
  return (
    <svg className="pointer-events-none absolute inset-0 size-full" shapeRendering="crispEdges" aria-hidden="true">
      <line x1="381" x2="381" y1="0" y2="100%" stroke="#ffebd2" strokeWidth="2" />
      <g transform="translate(-105 0)">
        <line x1="100%" x2="100%" y1="-2" y2="100%" stroke={GRID} strokeWidth="2" strokeDasharray="6 6" />
      </g>
    </svg>
  );
}

function Level({ y, color }: { y: number; color: string }) {
  return <line x1="10" x2="200%" y1={y} y2={y} stroke={color} />;
}

type Mark = { y: number; text: string; bg?: string; fg?: string; tick?: boolean };

function Scale({ top, marks }: { top: number; marks: Mark[] }) {
  return (
    <svg className="relative w-[90px] shrink-0 self-stretch overflow-visible" aria-hidden="true">
      <g transform={`translate(0 ${-top})`}>
        {marks.map((m) => (
          <Fragment key={m.text}>
            {m.tick && <path d={`M0 ${m.y}h4`} stroke={GRID} strokeWidth="2" shapeRendering="crispEdges" />}
            {m.bg && <rect x="5" y={m.y - 11} width="79" height="22" fill={m.bg} />}
            <text x="9" y={m.y + 6} fontSize="18" fill={m.fg ?? GRID}>
              {m.text}
            </text>
          </Fragment>
        ))}
      </g>
    </svg>
  );
}

function Panel({ height, top, marks, children }: { height: string; top: number; marks: Mark[]; children: ReactNode }) {
  return (
    <section className={clsx('flex', height)}>
      <div className="relative min-w-0 flex-1 overflow-hidden border-2 border-[#d4d4d4]">{children}</div>
      <Scale top={top} marks={marks} />
    </section>
  );
}

function Caption({ children, size = 'text-[18px]' }: { children: ReactNode; size?: string }) {
  return <p className={clsx('absolute left-[6px] top-[6px] whitespace-pre leading-[22px] text-[#d4d4d4]', size)}>{children}</p>;
}

function FilterTable() {
  return (
    <div className="absolute bottom-0 left-[16px] top-[44px] w-[192px] overflow-hidden border-x-2 border-t-2 border-[#c0c0c0] bg-[#030312] font-['Liberation_Sans',sans-serif] text-[21px] font-bold">
      <table className="w-full table-fixed border-collapse text-left text-[#ffd22e]">
        <caption className="h-[36px] whitespace-nowrap pl-[21px] pt-[6px] text-left leading-[28px]">RSI : 68/31 Filter</caption>
        <thead>
          <tr className="h-[26px] leading-[24px] text-[#c0c0c0]">
            <th className="w-[122px]" />
            <th className="pl-[9px]">M1</th>
          </tr>
        </thead>
        <tbody>
          {FILTER_PAIRS.map((p) => (
            <tr key={p} className="h-[24px] leading-[24px]">
              <td className="p-0 pl-[16px]">{p}</td>
              <td className="p-0">
                <span className="block h-[18px] w-[54px] bg-[#a9a9a9]" />
              </td>
            </tr>
          ))}
        </tbody>
      </table>
    </div>
  );
}

function MainPanel() {
  return (
    <Panel
      height="min-h-[772px] flex-1"
      top={100}
      marks={[
        ...PRICE_LABELS.map((text, i) => ({ text, y: 119 + i * 68, tick: true })),
        { y: 277, text: '0.66978', bg: '#d4d4d4', fg: '#000' },
      ]}
    >
      <div className="absolute left-0 top-[56px] w-[16px] overflow-hidden text-[21px] leading-[30px] text-[#ff1018]">
        {['RSI', 'SAR', 'MA', 'MA', 'AI', 'AI'].map((t, i) => (
          <p key={i} className="whitespace-nowrap">{t}</p>
        ))}
      </div>
      <p className="absolute left-[50px] top-[20px] whitespace-pre text-[21px] leading-[28px] text-[#ff1018]">M5  M15M30H1  H4  D1</p>
      <Plot top={102}>
        <Level y={277} color="#c4c8c8" />
        {OVERLAYS.map((o, i) => (
          <path key={i} d={o.d} stroke={o.color} strokeDasharray={o.dash} />
        ))}
        <path d="M397 756l5 6 16-17" stroke="#ff1018" strokeWidth="3" />
        <path d="M1936 102h20l-10 11z" fill="#c8c8c8" />
        <path d="M16 114h14l-7 8z" fill={GRID} />
      </Plot>
      <button type="button" className="absolute left-[190px] top-[70px] h-[44px] w-[142px] border-2 border-black bg-[#696969] pl-[19px] pt-[2px] text-left text-[25px] leading-none text-[#28ff28]">C12-on</button>
      <FilterTable />
      <p className="absolute left-[30px] top-[5px] whitespace-pre text-[19px] leading-[22px] text-[#d4d4d4]">AUDUSD,M1 0.66979 0.66979 0.66977 0.66978</p>
      <p className="absolute left-[7px] top-[31px] whitespace-nowrap text-[18px] leading-[22px] text-[#d4d4d4]">-0 minutes and 33 seconds to bar close. {'{Spread: 0.5}'}</p>
      <p className="absolute left-[1975px] top-[161px] whitespace-nowrap text-[22px] leading-[30px] text-white">-0:33 {'{0.5}'}</p>
      <Plot top={102}>
        <polyline points={PRICE} stroke="#ffff32" />
      </Plot>
      <Guides />
      <span className="absolute right-[-2px] top-[342px] h-[152px] w-[4px] bg-white" />
      <button type="button" className="absolute right-[40px] top-[30px] h-[40px] w-[80px] border-2 border-[#dcdcdc] bg-[#0a1eff] pr-[4px] text-[21px] leading-none text-white">Hide</button>
    </Panel>
  );
}

function SymbolButton({ name, active = false }: { name: string; active?: boolean }) {
  return (
    <button
      type="button"
      className={clsx(
        'h-[30px] w-[86px] border-2 border-[#a4a4a4] px-[1px]',
        active ? 'bg-[#0a1eff] text-[#ff9632]' : 'bg-[#dcdcdc] text-black'
      )}
    >
      <span className="flex justify-center overflow-hidden whitespace-nowrap pr-[4px]">{name}</span>
    </button>
  );
}

function RsiPanel() {
  return (
    <Panel
      height="h-[214px]"
      top={874}
      marks={[
        { y: 889, text: '63.6757' },
        { y: 1073, text: '30.673' },
        { y: 923, text: '56.1912', bg: '#ff28ff', fg: '#000' },
        { y: 963, text: '50.0000', bg: '#28ffff', fg: '#000' },
        { y: 1001, text: '43.7500', bg: '#3cb371', fg: '#000' },
        { y: 1041, text: '37.5168', bg: '#2e8b57', fg: '#000' },
        { y: 1081, text: '31.2500', bg: '#0a640a', fg: '#000' },
      ]}
    >
      <Plot top={876}>
        <Level y={925} color="#ff28ff" />
        <Level y={965} color="#28ffff" />
        <Level y={1003} color="#3cb371" />
        <Level y={1043} color="#2e8b57" />
        <Level y={1083} color="#0a640a" />
        <polyline points={RSI} stroke="#fff" />
      </Plot>
      <Caption size="text-[19px]">{'RSI(60) 51.2459  =>MA(20) 50.2419 =>MA(50) 48.5984'}</Caption>
      <div className="absolute left-[40px] top-[40px] flex flex-col gap-[2px] font-['Liberation_Sans',sans-serif] text-[20px] font-bold leading-[28px]">
        {SYMBOL_ROWS.map((row) => (
          <div key={row[0]} className="flex gap-[4px]">
            {row.map((s) => (
              <SymbolButton key={s} name={s} active={s === 'AUDUSD'} />
            ))}
          </div>
        ))}
        <div className="mt-[4px] flex gap-[4px]">
          {Array.from({ length: 9 }, (_, i) => (
            <span key={i} className={clsx('h-[30px] w-[86px] border-2 border-[#a4a4a4]', i === 0 ? 'bg-[#0a1eff]' : 'bg-[#dcdcdc]')} />
          ))}
        </div>
      </div>
      <Plot top={876}>
        <path d={RSI_FAST} stroke="#d9a02e" strokeWidth="6" strokeLinejoin="round" />
        <path d={RSI_SLOW} stroke="#2890ff" strokeWidth="6" strokeLinejoin="round" />
      </Plot>
      <Guides />
    </Panel>
  );
}

function SpearmanPanel() {
  return (
    <Panel
      height="h-[66px]"
      top={1090}
      marks={[
        { y: 1105, text: '1' },
        { y: 1123, text: '0.00', tick: true },
        { y: 1141, text: '-1' },
      ]}
    >
      <Plot top={1092}>
        <clipPath id="overbought">
          <rect x="0" y="1080" width="4000" height="24" />
        </clipPath>
        <clipPath id="oversold">
          <rect x="0" y="1142" width="4000" height="20" />
        </clipPath>
        <path d={SPEARMAN} stroke="#a9a9a9" />
        <path d={SPEARMAN} stroke="#1ebeff" strokeWidth="8" strokeLinejoin="round" clipPath="url(#overbought)" />
        <path d={SPEARMAN} stroke="#f4a460" strokeWidth="8" strokeLinejoin="round" clipPath="url(#oversold)" />
      </Plot>
      <Caption>M1 Spearman (12) 0.6713</Caption>
      <Guides />
    </Panel>
  );
}

function SsrcPanel() {
  return (
    <Panel
      height="h-[256px]"
      top={1158}
      marks={[
        { y: 1173, text: '1.3' },
        { y: 1201, text: '0.9' },
        { y: 1210, text: '0.8' },
        { y: 1219, text: '0.7' },
        { y: 1287, text: '0.00', tick: true },
        { y: 1353, text: '-0.7' },
        { y: 1363, text: '-0.8' },
        { y: 1373, text: '-0.9' },
        { y: 1399, text: '-1.3' },
      ]}
    >
      <Plot top={1160}>
        <path d={SSRC} stroke="#fff" />
        {[1201, 1211, 1219, 1287, 1355, 1363, 1373].map((y) => (
          <Level key={y} y={y} color="#696969" />
        ))}
      </Plot>
      <Caption size="text-[19px]">SSRC( SR:9, FP:12 ) 0.7769</Caption>
      <Guides />
    </Panel>
  );
}

function BandsPanel() {
  return (
    <Panel height="h-[54px]" top={1416} marks={[{ y: 1431, text: '1' }, { y: 1455, text: '0' }]}>
      <Plot top={1418}>
        <rect x="10" y="1420" width="1936" height="48" fill="#808080" />
        <rect x="382" y="1420" width="34" height="48" fill="#3ccd3c" />
        <rect x="416" y="1420" width="68" height="48" fill="#ff1018" />
        <rect x="1836" y="1420" width="18" height="48" fill="#3ccd3c" />
      </Plot>
      <Caption>! 2 bands cross 1.0000</Caption>
      <Guides />
    </Panel>
  );
}

function TimeAxis() {
  return (
    <div className="relative flex h-[40px] overflow-hidden pl-[2px] text-[18px] leading-[22px] text-[#d4d4d4]">
      {TIME_LABELS.map((t) => (
        <div key={t} className="w-32 shrink-0 whitespace-nowrap">
          <span className="block h-[6px] w-[2px] bg-[#d4d4d4]" />
          <span className="-ml-[3px]">{t}</span>
        </div>
      ))}
      <span className="absolute left-[304px] top-[6px] h-[22px] w-[156px] whitespace-nowrap bg-[#ffebd2] text-center text-black">2023.07.04 07:36</span>
    </div>
  );
}

function ChartTabs() {
  const tabs = ['NZDUSD,M5', 'USDCHF,M5', 'BTCUSD,M1', 'AUDUSD,M1', 'NZDUSD,M1'];
  return (
    <div className="flex h-[44px] items-start border-b-2 border-white text-[21px] leading-none">
      <div className="flex h-full flex-1 items-start border-t-2 border-black pl-[13px]" role="tablist">
        {tabs.map((t, i) =>
          i === 3 ? (
            <button type="button" role="tab" aria-selected="true" key={i} className="-mt-[2px] h-[40px] w-[160px] border-2 border-t-0 border-black bg-white pr-[6px] pt-[2px]">
              {t}
            </button>
          ) : (
            <button
              type="button"
              role="tab"
              aria-selected="false"
              key={i}
              className={clsx('mt-[5px] h-[28px] w-[160px] pr-[4px] text-[#7c7c7c]', i !== 2 && 'border-r-2 border-[#808080]')}
            >
              {t}
            </button>
          )
        )}
        <div className="ml-auto mr-[18px] mt-[10px] flex gap-[32px]">
          <button type="button" aria-label="Previous tab" className="size-0 border-y-[6px] border-r-[6px] border-y-transparent border-r-[#909090]" />
          <button type="button" aria-label="Next tab" className="size-0 border-y-[6px] border-l-[6px] border-y-transparent border-l-[#909090]" />
        </div>
      </div>
    </div>
  );
}

function StatusBar() {
  return (
    <footer className="flex h-[44px] items-center overflow-hidden whitespace-nowrap text-[21px] leading-none">
      <p className="flex-1 pl-[3px] pt-[8px]">For Help, press F1</p>
      {STATUS.map((s) => (
        <p key={s.text} className={clsx('mt-[6px] h-[36px] shrink-0 border-l-2 border-[#a0a0a0] pl-[7px] pt-[10px]', s.width)}>
          {s.text}
        </p>
      ))}
      <div className="relative mt-[6px] flex h-[36px] w-[278px] shrink-0 border-l-2 border-[#a0a0a0] pl-[10px]">
        <svg viewBox="0 0 46 28" className="mt-[2px] h-[28px] w-[46px]" shapeRendering="crispEdges" aria-hidden="true">
          {Array.from({ length: 8 }, (_, i) => (
            <Fragment key={i}>
              <rect x={i * 6} y="0" width="4" height={18 - i * 2} fill="#5a7a14" />
              <rect x={i * 6} y={20 - i * 2} width="4" height={8 + i * 2} fill="#0a4660" />
            </Fragment>
          ))}
        </svg>
        <span className="ml-[7px] pt-[10px]">275846/280 kb</span>
        <svg viewBox="0 0 30 30" className="absolute bottom-0 right-0 size-[30px]" aria-hidden="true">
          <path d="M2 30L30 2M10 30L30 10M18 30L30 18M25 30l5-5" stroke="#a0a0a0" strokeWidth="3" />
        </svg>
      </div>
    </footer>
  );
}

export default function App() {
  return (
    <div className="flex min-h-screen flex-col bg-[#e4e4e4] font-['DejaVu_Sans_Condensed','DejaVu_Sans',sans-serif] text-black">
      <header>
        <MenuBar />
        <div className="border-b-2 border-t-2 border-[#a0a0a0]">
          <div className="border-t-2 border-white">
            <Toolbar />
          </div>
        </div>
      </header>
      <main className="flex flex-1 flex-col border-l-2 border-r-2 border-l-[#a0a0a0] border-r-white">
        <div className="flex flex-1 flex-col gap-[2px] border-l-2 border-r-2 border-t-2 border-[#696969] border-r-[#e4e4e4] bg-[#030312] pl-[4px] pt-[4px]">
          <MainPanel />
          <RsiPanel />
          <SpearmanPanel />
          <SsrcPanel />
          <div>
            <BandsPanel />
            <TimeAxis />
          </div>
        </div>
        <div className="h-[2px] bg-white" />
      </main>
      <ChartTabs />
      <StatusBar />
    </div>
  );
}
